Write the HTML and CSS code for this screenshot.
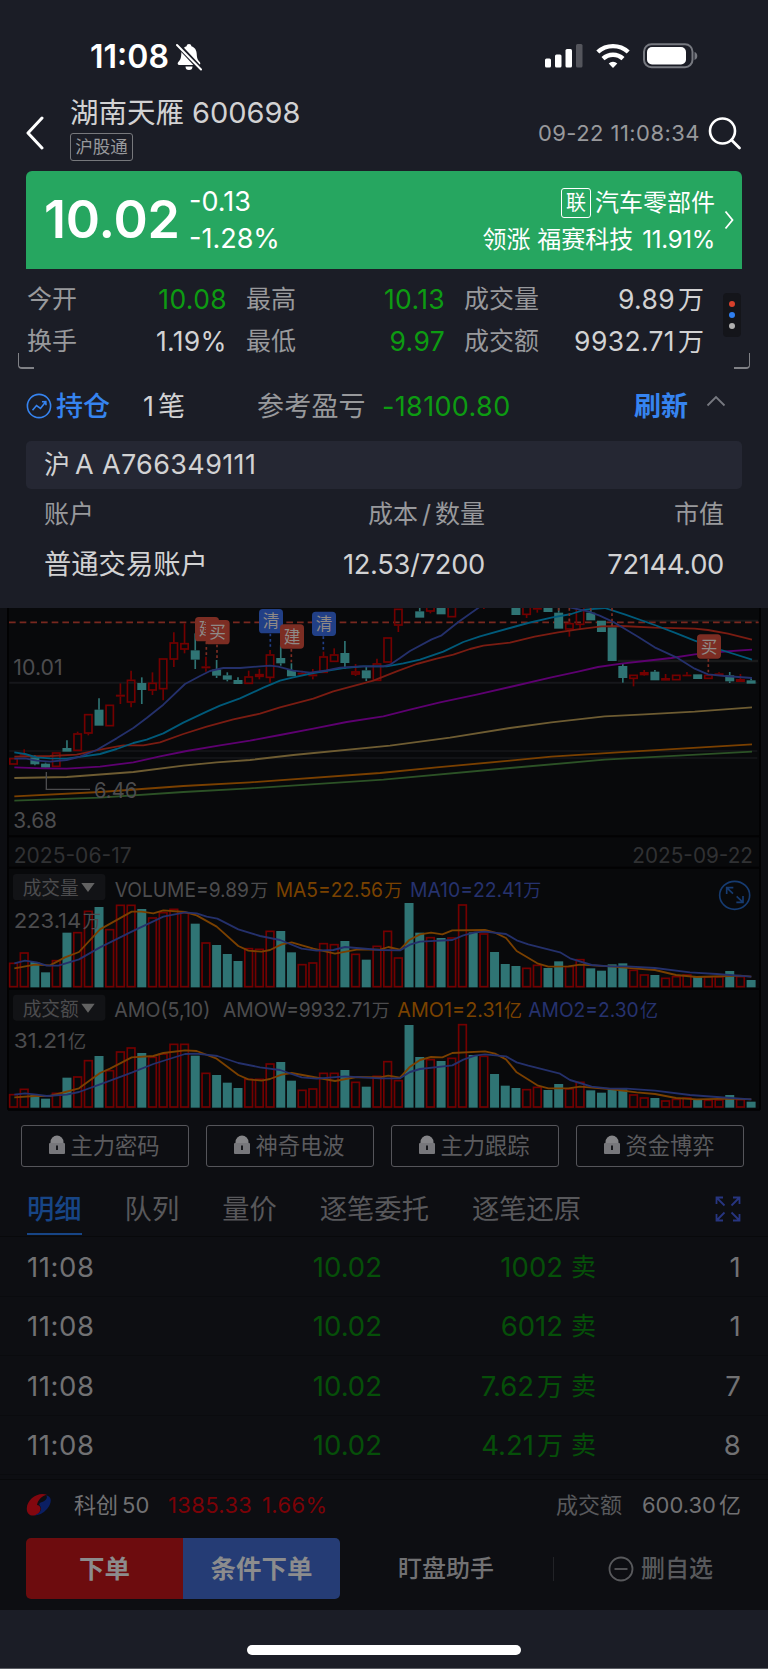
FILE: index.html
```html
<!DOCTYPE html>
<html lang="zh-CN">
<head>
<meta charset="utf-8">
<title>湖南天雁 600698</title>
<link rel="stylesheet" href="styles.css">
</head>
<body>
<div class="screen">
  <header class="status">
    <span class="clock">11:08</span>
    <svg class="bell" width="26" height="28" viewBox="0 0 26 28"><path d="M13 1c1.400 0 2.200.9 2.400 2.200 3.600 1.100 5.100 4 5.300 7.600.3 5 1 6.300 3 8.300 1.200 1.300.6 2.900-1 2.900H3.300c-1.600 0-2.200-1.600-1-2.900 2-2 2.700-3.300 3-8.300.2-3.600 1.700-6.500 5.300-7.600C10.800 1.900 11.600 1 13 1zM9.500 23.500h7a3.500 3.500 0 0 1-7 0z" fill="#fff"/><path d="M1.500 1.500l23.500 25" stroke="#1b1d26" stroke-width="5"/><path d="M1 2l24 24.500" stroke="#fff" stroke-width="2" stroke-linecap="round"/></svg>
    <svg class="signals" width="154" height="27" viewBox="0 0 154 27"><g fill="#fff"><rect x="1" y="15.500" width="6" height="9" rx="1.500"/><rect x="11" y="11.500" width="6.500" height="13" rx="1.500"/><rect x="21.500" y="6" width="6.500" height="18.500" rx="1.500"/><rect x="32" y="1" width="6.500" height="23.500" rx="1.500" opacity=".25"/><path d="M69 25l-4.300-4.400a6.200 6.200 0 0 1 8.600 0z"/></g><g fill="none" stroke="#fff" stroke-width="4.400"><path d="M53.800 9a22.500 22.500 0 0 1 30.400 0"/><path d="M59 15.700a14.600 14.600 0 0 1 20 0"/></g><rect x="100" y="1.200" width="48.500" height="23" rx="7.500" fill="none" stroke="#777980" stroke-width="2"/><rect x="103" y="4" width="39" height="17.500" rx="5" fill="#fff"/><path d="M150.500 9v8c1.800-.6 2.800-2.200 2.800-4s-1-3.400-2.800-4z" fill="#777980"/></svg>
  </header>

  <div class="title-bar">
    <svg class="back" width="20" height="34" viewBox="0 0 20 34"><path d="M17 2L3 17l14 15" fill="none" stroke="#fff" stroke-width="3" stroke-linecap="round" stroke-linejoin="round"/></svg>
    <div class="stock">
      <div class="stock-name">湖南天雁<span>600698</span></div>
      <div class="tag">沪股通</div>
    </div>
    <time class="stamp">09-22 11:08:34</time>
    <svg class="search" width="34" height="34" viewBox="0 0 34 34"><circle cx="14.500" cy="15" r="12.500" fill="none" stroke="#fff" stroke-width="2.600"/><path d="M23.500 24l8 8" stroke="#fff" stroke-width="2.800" stroke-linecap="round"/></svg>
  </div>

  <section class="quote">
    <div class="price">10.02</div>
    <div class="change"><div>-0.13</div><div class="pct">-1.28%</div></div>
    <div class="sector">
      <div><span class="link-tag">联</span>汽车零部件</div>
      <div class="lead">领涨 福赛科技 <span>11.91%</span></div>
    </div>
    <svg class="go" width="12" height="20" viewBox="0 0 12 20"><path d="M2.500 1.500L9.500 10l-7 8.500" fill="none" stroke="#fff" stroke-width="1.800"/></svg>
  </section>

  <section class="stats">
    <div class="stat-grid">
      <span>今开</span><b class="down">10.08</b><span>最高</span><b class="down">10.13</b><span>成交量</span><b>9.89<i>万</i></b>
      <span>换手</span><b>1.19%</b><span>最低</span><b class="down">9.97</b><span>成交额</span><b>9932.71<i>万</i></b>
    </div>
    <div class="more"><i class="dot red"></i><i class="dot blue"></i><i class="dot gray"></i></div>
    <i class="corner left"></i><i class="corner right"></i>
  </section>

  <section class="holding">
    <svg class="trend" width="26" height="26" viewBox="0 0 26 26" fill="none" stroke="#3684f0" stroke-width="1.600"><circle cx="13" cy="13" r="11.600"/><path d="M6.500 17.200l4-4.700 4 3 5-6.500M16 8.700l3.800-.2.200 3.800"/></svg>
    <span class="pos">持仓</span>
    <span class="count">1<i>笔</i></span>
    <span class="pl-label">参考盈亏</span>
    <span class="pl down">-18100.80</span>
    <span class="refresh">刷新</span>
    <svg class="fold" width="20" height="12" viewBox="0 0 20 12"><path d="M1.500 10.500L10 2l8.500 8.500" fill="none" stroke="#777980" stroke-width="1.800"/></svg>
  </section>
  <div class="account">沪<span>A A766349111</span></div>
  <div class="table-row head"><span>账户</span><span>成本<em>/</em>数量</span><span>市值</span></div>
  <div class="table-row"><span>普通交易账户</span><span class="num cost">12.53/7200</span><span class="num">72144.00</span></div>

  <section class="charts">
    <svg id="chart" width="768" height="506" viewBox="0 24 2304 1518"></svg>
  </section>

  <section class="tools">
    <div><svg class="lock" viewBox="0 0 18 20"><path d="M2.500 8.500V7a6.500 6.500 0 0 1 13 0v1.500z" fill="#858588"/><rect x="1" y="8" width="16" height="11" rx="1" fill="#77777b"/><path d="M9 10.500v4.500" stroke="#0d0e12" stroke-width="1.800"/></svg>主力密码</div>
    <div><svg class="lock" viewBox="0 0 18 20"><path d="M2.500 8.500V7a6.500 6.500 0 0 1 13 0v1.500z" fill="#858588"/><rect x="1" y="8" width="16" height="11" rx="1" fill="#77777b"/><path d="M9 10.500v4.500" stroke="#0d0e12" stroke-width="1.800"/></svg>神奇电波</div>
    <div><svg class="lock" viewBox="0 0 18 20"><path d="M2.500 8.500V7a6.500 6.500 0 0 1 13 0v1.500z" fill="#858588"/><rect x="1" y="8" width="16" height="11" rx="1" fill="#77777b"/><path d="M9 10.500v4.500" stroke="#0d0e12" stroke-width="1.800"/></svg>主力跟踪</div>
    <div><svg class="lock" viewBox="0 0 18 20"><path d="M2.500 8.500V7a6.500 6.500 0 0 1 13 0v1.500z" fill="#858588"/><rect x="1" y="8" width="16" height="11" rx="1" fill="#77777b"/><path d="M9 10.500v4.500" stroke="#0d0e12" stroke-width="1.800"/></svg>资金博弈</div>
  </section>

  <nav class="tabs">
    <span class="active">明细</span><span>队列</span><span>量价</span><span>逐笔委托</span><span>逐笔还原</span>
    <svg class="expand" width="26" height="26" viewBox="0 0 26 26" fill="none" stroke="#273580" stroke-width="1.800"><path d="M1.500 8V1.500H8M1.500 1.500l8 8M18 1.500h6.500V8M24.500 1.500l-8 8M1.500 18v6.500H8M1.500 24.500l8-8M18 24.500h6.500V18M24.500 24.500l-8-8"/></svg>
  </nav>

  <div class="ticks">
    <div class="tick"><span>11:08</span><span class="g">10.02</span><span class="g qty">1002</span><span class="g side">卖</span><span class="cnt">1</span></div>
    <div class="tick"><span>11:08</span><span class="g">10.02</span><span class="g qty">6012</span><span class="g side">卖</span><span class="cnt">1</span></div>
    <div class="tick"><span>11:08</span><span class="g">10.02</span><span class="g qty">7.62<i>万</i></span><span class="g side">卖</span><span class="cnt">7</span></div>
    <div class="tick"><span>11:08</span><span class="g">10.02</span><span class="g qty">4.21<i>万</i></span><span class="g side">卖</span><span class="cnt">8</span></div>
  </div>

  <div class="index">
    <svg class="logo" width="26" height="24" viewBox="0 0 26 24"><path d="M21 1.800C12-1.500 1 6 .8 15.500.6 20 3.500 23 8 22.500c4-.5 7-4 6.500-7.500-.4-2.200-2-2.700-3.500-3C12 6.500 16 3 21 1.800z" fill="#82070f"/><path d="M20 2.200c7 1.300 5.500 8.800 1 13.800-4 4.500-8.500 6.500-13 6.500 4.500-1.500 7.500-4.500 7-7.500-.5-2.500-2.500-3-1.500-4.500 1-1.500 4-1.500 6-3.500 1.500-1.500 2-3.500.5-4.800z" fill="#0b1f63"/></svg>
    <span class="idx-name">科创<i>50</i></span><span class="idx-val">1385.33</span><span class="idx-pct">1.66%</span>
    <span class="idx-label">成交额</span><span class="idx-amt">600.30<i>亿</i></span>
  </div>

  <footer class="actions">
    <div class="order">下单</div><div class="cond">条件下单</div>
    <div class="helper">盯盘助手</div><i class="split"></i>
    <svg class="minus" width="26" height="26" viewBox="0 0 26 26" fill="none" stroke="#58595c" stroke-width="1.800"><circle cx="13" cy="13" r="11.500"/><path d="M6.500 13h13"/></svg>
    <div class="remove">删自选</div>
  </footer>
  <div class="home"><i></i></div>
</div>
<script src="chart.js"></script>
</body>
</html>
```
FILE: styles.css
```css
* { box-sizing: border-box; }
body { margin: 0; background: #1b1d26; }
i, em { font-style: normal; }
svg { display: block; flex: none; }
.screen {
  width: 768px; height: 1669px; overflow: hidden;
  display: flex; flex-direction: column;
  background: #1b1d26; color: #d2d2d3;
  font-family: Inter, "Noto Sans CJK SC", sans-serif;
  line-height: 1; white-space: nowrap;
}
.screen > * { flex: none; }
.down { color: #0d9b12; }

.status { height: 113px; padding: 0 70px 0 90px; display: flex; align-items: center; }
.clock { width: 85px; font-size: 32px; font-weight: 600; letter-spacing: 0; color: #fff; }
.bell { margin: 0 0 0 1px; }
.signals { margin-left: auto; }

.title-bar { height: 58px; display: flex; align-items: center; padding: 0 26px 0 25px; margin-top: -9px; }
.stock { margin-left: 25px; height: 58px; display: flex; flex-direction: column; align-items: flex-start; }
.stock-name { font-size: 28.500px; line-height: 30px; margin-top: -6px; }
.stock-name span { margin-left: 8px; font-size: 29px; }
.tag { margin-top: 5px; height: 28px; width: 63px; border: 1px solid #77787c; border-radius: 3px; font-size: 17.500px; line-height: 26px; text-align: center; color: #98999c; }
.stamp { margin-left: auto; font-size: 22px; color: #98999c; letter-spacing: .45px; }
.search { margin-left: 8px; }

.quote { height: 98px; margin: 9px 26px 0; padding: 0 27px 0 18px; border-radius: 6px 6px 0 0; background: #26a660; color: #fff; display: flex; align-items: center; }
.price { width: 145px; font-size: 52px; font-weight: 600; letter-spacing: -.2px; }
.change { font-size: 27px; line-height: 37px; letter-spacing: 0; }
.sector { margin: 2px 0 0 auto; text-align: right; font-size: 24px; line-height: 37px; }
.sector > div { display: flex; justify-content: flex-end; align-items: center; }
.link-tag { width: 30px; height: 30px; margin-right: 4px; border: 1px solid #fff; border-radius: 3px; font-size: 20px; line-height: 28px; text-align: center; }
.lead span { margin-left: 9px; letter-spacing: -.3px; font-size: 24px; }
.go { margin: 0 -20px 0 8px; }

.stats { position: relative; height: 102px; padding: 9px 27px 0 27px; display: flex; justify-content: space-between; }
.stat-grid { width: 678px; display: grid; grid-template-columns: 60px 140px 60px 158px 80px 179px; grid-template-rows: 42px 42px; align-items: center; font-size: 25px; }
.stat-grid span { color: #98999c; }
.stat-grid b { font-weight: 400; text-align: right; font-size: 26.500px; letter-spacing: .35px; }
.stat-grid span:nth-of-type(3n+2) { padding-left: 19px; }
.stat-grid span:nth-of-type(3n) { padding-left: 19px; }
.stat-grid b i { margin-left: 3px; font-size: 26px; letter-spacing: 0; }
.more { width: 18px; height: 44px; margin-top: 15px; border-radius: 4px; background: #14151a; display: flex; flex-direction: column; align-items: center; justify-content: center; gap: 5px; }
.dot { width: 6px; height: 6px; border-radius: 50%; }
.dot.red { background: #d8402c; } .dot.blue { background: #2f7ff0; } .dot.gray { background: #b0b0b0; }
.corner { position: absolute; bottom: 2px; width: 16px; height: 16px; border-bottom: 2px solid #808186; }
.corner.left { left: 18px; border-left: 1.500px solid #808186; border-bottom-left-radius: 4px; }
.corner.right { right: 18px; border-right: 1.500px solid #808186; border-bottom-right-radius: 4px; }

.holding { height: 70px; padding: 0 42px 0 26px; display: flex; align-items: center; font-size: 27px; }
.pos { margin-left: 4px; width: 87px; color: #3684f0; font-weight: 500; }
.count { width: 114px; } .count i { margin-left: 4px; }
.pl-label { width: 125px; color: #98999c; letter-spacing: .2px; }
.pl { letter-spacing: .35px; }
.refresh { margin-left: auto; margin-right: 18px; color: #3684f0; font-weight: 700; }
.fold { margin-top: -10px; }
.account { height: 48px; margin: 0 26px; padding-left: 18px; background: #252733; border-radius: 5px; font-size: 26px; line-height: 47px; }
.account span { margin-left: 5px; letter-spacing: .35px; font-size: 27px; }
.table-row { height: 66px; padding: 0 44px 21px; display: grid; grid-template-columns: 220px 221px 1fr; align-items: center; font-size: 27.300px; }
.table-row.head { height: 53px; padding-bottom: 2px; color: #98999c; font-size: 25px; }
.table-row span + span { text-align: right; }
.table-row em { margin: 0 4px; }
.num { letter-spacing: -.3px; }

.charts { height: 506px; background: #0d0e12; }

.tools { height: 62px; padding: 11px 24px 0 21px; background: #0d0e12; display: grid; grid-template-columns: repeat(4, 168px); justify-content: space-between; color: #5b5b5e; font-size: 22.300px; }
.tools div { height: 42px; padding-right: 2px; border: 1.500px solid #55555a; border-radius: 3px; display: flex; align-items: center; justify-content: center; }
.lock { width: 18px; height: 20px; margin: -3px 4px 0 0; }
.tabs { height: 61px; background: #0d0e12; border-bottom: 1px solid #08090b; padding: 5px 27px 0 27px; display: flex; font-size: 27.300px; color: #58585b; }
.tabs span { height: 54px; line-height: 57px; margin-right: 43px; }
.tabs .active { color: #174586; font-weight: 500; border-bottom: 2.500px solid #174586; }
.expand { margin: 15px 0 0 auto; }
.ticks { background: #0d0e12; height: 243px; border-bottom: 1.500px solid #08090b; }
.tick { height: 59.500px; padding: 2px 27px 0; border-bottom: 1px solid #0a0b0e; display: grid; grid-template-columns: 250px 105px 181px 42px 1fr; align-items: center; font-size: 27.500px; color: #717173; letter-spacing: .3px; }
.tick > span:first-child { letter-spacing: .6px; }
.tick span:not(:first-child) { text-align: right; }
.tick .g { color: #064f09; letter-spacing: 0; } .tick .side { font-size: 25px; padding-right: 9px; }
.tick i { margin-left: 3px; font-size: 26px; }

.index { height: 50px; padding: 0 27px 0 26px; background: #0d0e12; display: flex; align-items: center; color: #717173; font-size: 22px; }
.idx-name { margin-left: 22px; width: 94px; } .idx-name i { margin-left: 4px; }
.idx-val, .idx-pct { color: #7b0207; letter-spacing: .35px; } .idx-val { width: 94px; }
.idx-label { margin-left: auto; margin-right: 20px; color: #58595c; } .idx-amt i { margin-left: 3px; }
.actions { height: 80px; padding: 8px 26px 11px; background: #0d0e12; display: flex; align-items: center; color: #717173; font-size: 24px; }
.order, .cond { width: 157px; height: 61px; line-height: 61px; text-align: center; font-size: 25.500px; font-weight: 700; color: #8c8c8d; }
.order { background: #6d0c0e; border-radius: 5px 0 0 5px; }
.cond { background: #253c75; border-radius: 0 5px 5px 0; }
.helper { margin-left: 58px; font-weight: 500; }
.split { width: 1px; height: 24px; background: #222327; margin: 0 54px 0 59px; }
.remove { margin-left: 7px; color: #58595c; font-weight: 500; }
.home { flex: 1 !important; display: flex; justify-content: center; padding-top: 35px; border-bottom: 1px solid #5a5c62; }
.home i { width: 274px; height: 10px; border-radius: 5px; background: #fff; }
```
FILE: chart.js
```js
// Candles, volume and turnover panels. Units are thirds of a pixel.
const svg = document.getElementById('chart');
const NS = 'http://www.w3.org/2000/svg';
function add(tag, attrs, text) {
  const el = document.createElementNS(NS, tag);
  for (const k in attrs) el.setAttribute(k, attrs[k]);
  if (text) el.textContent = text;
  svg.appendChild(el);
  return el;
}
const rect = (x, y, w, h, fill, more) => add('rect', { x, y, width: w, height: h, fill, ...more });
const line = (x1, y1, x2, y2, stroke, w, dash) =>
  add('line', { x1, y1, x2, y2, stroke, 'stroke-width': w || 4, 'stroke-dasharray': dash || 'none' });
const FONT = 'Inter, "Noto Sans CJK SC", sans-serif';
const label = (s, x, y, w, fill, size) =>
  add('text', { x, y, fill, 'font-size': size || 63, textLength: w, lengthAdjust: 'spacingAndGlyphs', 'font-family': FONT }, s);
const curve = (pts, stroke) =>
  add('path', { d: 'M' + pts.trim().split(/\s+/).join('L'), fill: 'none', stroke, 'stroke-width': 5.5, 'stroke-linejoin': 'round' });
const RED = '#730000', GREEN = '#2f7474', X = i => 40.5 + 32.07 * i;

rect(23, 24, 2257, 1505, '#08090b');
line(24, 24, 24, 1529, '#020203', 6);
line(2280, 24, 2280, 1529, '#020203', 6);
[709, 803, 1167, 1529].forEach(y => line(24, y, 2280, y, '#020203', 6));
line(28, 248, 2272, 248, '#16171b', 6);
line(28, 453, 2272, 453, '#16171b', 5);
line(28, 474, 2272, 474, '#16171b', 5);
line(1854, 183, 2274, 183, '#191a1b', 8);
line(1930, 62, 2274, 62, '#17181a', 6);
line(27, 67, 2276, 67, '#78281f', 5, '20 12');

// [color, top, bottom, high, low]; f = solid rising body
const candles = `r 474 494 474 494|f 462 467 448 470|g 472 493 465 496|g 491 503 488 506|r 457 501 457 501|g 444 455 421 455|r 400 453 395 453|r 342 401 342 406|g 329 377 295 377|r 314 379 314 379|f 284 290 250 312|r 239 308 212 322|g 249 270 232 312|r 248 272 217 285|r 175 268 175 301|r 127 179 97 201|r 129 149 70 160|g 151 179 100 207|f 199 205 170 215|g 209 227 180 234|g 226 239 217 244|g 240 252 232 252|r 229 252 212 252|r 222 231 207 238|r 163 234 150 248|g 174 190 135 197|g 210 229 190 229|f 218 224 212 226|f 223 229 207 238|r 169 219 155 219|r 163 186 145 186|g 159 189 123 207|r 214 224 192 228|g 211 235 200 243|r 190 243 176 243|r 112 188 112 188|r 26 77 26 96||g 34 53 15 53|r 10 35 10 40|g 10 43 10 43|r 10 52 10 52|||f 18 20 18 27|||g 10 45 10 45|r 10 45 10 54|f 15 29 10 38|g 10 36 10 36|g 38 86 24 86|r 69 89 55 110|r 15 75 10 87|g 38 61 24 61|g 62 96 62 96|g 82 183 70 183|g 198 234 190 248|r 224 237 224 259|f 216 226 210 228|g 215 241 210 241|f 234 242 222 242|r 224 241 224 241|f 224 229 216 229|g 223 237 223 237|r 224 237 224 237|f 220 227 217 227|g 226 244 216 249|f 237 246 222 246|g 241 251 235 251`.split('|');
candles.forEach((c, i) => {
  if (!c) return;
  const [k, t, b, h, l] = c.split(' ').map((v, n) => n ? +v : v), x = X(i), col = k === 'g' ? GREEN : RED;
  if (h < t) line(x, h, x, t, col, 5);
  if (l > b) line(x, b, x, l, col, 5);
  if (k === 'r') rect(x - 11, t + 2, 22, b - t - 4, 'none', { stroke: col, 'stroke-width': 5 });
  else rect(x - 13.5, t, 27, b - t, col);
});

curve('43,602 300,593 550,576 750,565 1150,539 1530,504 1814,479 2256,455', '#2c5226');
curve('43,589 300,576 550,558 750,547 1140,519 1310,502 1530,482 1654,470 1854,457 2256,433', '#7a4000');
curve('43,534 200,531 400,516 550,497 650,487 750,480 880,465 1170,437 1350,413 1530,384 1654,367 1814,349 1934,343 2084,335 2256,322', '#6e5c32');
curve('43,502 130,505 200,506 300,500 400,487 480,469 560,453 660,436 750,422 840,405 940,386 1040,366 1150,349 1230,329 1320,307 1430,284 1530,261 1654,232 1734,215 1794,201 1864,191 1934,183 2014,174 2084,163 2154,156 2256,149', '#5d0070');
curve('43,470 150,468 230,464 300,449 370,436 430,436 480,427 550,402 620,380 700,358 780,341 840,322 940,296 1000,274 1120,242 1190,214 1250,192 1310,176 1360,164 1410,147 1450,137 1530,128 1604,110 1674,97 1734,88 1804,79 1864,78 1964,83 2084,86 2124,90 2184,101 2256,119', '#7a1c12');
curve('43,457 75,462 110,472 150,475 200,476 250,469 300,462 350,447 400,429 440,419 490,400 550,368 620,335 660,317 720,295 790,263 840,242 880,232 940,219 1030,204 1090,199 1160,199 1210,190 1260,179 1330,155 1390,126 1440,109 1530,84 1584,69 1654,53 1714,42 1754,29 1814,24 1874,43 1964,75 2024,98 2084,122 2164,150 2256,179', '#005a7a');
curve('43,476 75,475 110,482 150,485 200,480 240,470 290,450 350,415 400,384 440,354 490,314 555,252 600,228 630,213 670,204 720,204 780,199 810,197 835,200 880,212 930,218 980,211 1020,203 1080,199 1150,199 1170,194 1200,174 1230,153 1295,118 1325,106 1375,66 1440,20', '#24306b');
curve('1699,20 1764,34 1799,47 1844,68 1914,110 1964,142 2029,172 2084,206 2124,223 2174,228 2256,234', '#24306b');

line(139, 516, 139, 568, '#4c4c4e', 4);
line(137, 568, 270, 568, '#4c4c4e', 4);
label('10.01', 40, 226, 148, '#4c4c4e');
label('6.46', 282, 594, 130, '#4c4c4e');
label('3.68', 40, 684, 131, '#4c4c4e');
label('2025-06-17', 41, 790, 354, '#303133');
label('2025-09-22', 1897, 790, 362, '#303133');

// trade markers
const badge = (s, x, y, fill, drop) => {
  line(x + 34, y + 74, x + 34, drop, fill, 5, '8 8');
  rect(x, y, 72, 73, fill, { rx: 11 });
  add('text', { x: x + 36, y: y + 55, fill: '#8f8986', 'font-size': 50, 'text-anchor': 'middle', 'font-family': '"Noto Sans CJK SC", sans-serif' }, s);
};
const BR = '#7c2d23', BB = '#213f86';
badge('建', 585, 51, BR, 172);
badge('买', 617, 60, BR, 182);
badge('清', 777, 27, BB, 140);
badge('建', 840, 73, BR, 190);
badge('清', 936, 35, BB, 150);
badge('买', 2091, 103, BR, 218);
[1676, 1708, 1772, 1836].forEach((x, i) => line(x, 24, x, [34, 66, 34, 78][i], BR, 5, '8 8'));

// volume and turnover
const vol = [278,247,276,307,270,188,186,122,111,177,104,104,117,142,126,116,127,161,217,225,252,273,234,236,182,183,247,282,277,219,222,213,251,269,227,182,262,99,188,201,204,202,103,187,190,246,282,288,293,284,294,274,288,267,295,302,283,280,299,313,315,323,318,313,319,319,319,303,318,330];
const amo = [672,656,675,686,668,623,619,570,558,600,544,532,549,560,550,521,521,557,608,615,638,654,626,626,580,576,632,659,655,608,608,600,635,650,617,573,630,465,561,567,573,563,462,555,557,612,647,654,657,650,660,642,655,635,661,668,658,658,673,682,684,691,686,682,689,689,688,675,687,695];
const falling = new Set([2,3,5,8,12,17,19,20,21,25,26,31,33,37,38,40,43,45,46,47,50,51,54,55,56,57,60,64,67,69]);
[[vol, 352], [amo, 713]].forEach(([d, base]) => d.forEach((t, i) => {
  const x = X(i), y = t + 810;
  if (falling.has(i)) rect(x - 13.5, y, 27, base - t, GREEN);
  else rect(x - 11.5, y + 2, 23, base - t - 4, 'none', { stroke: RED, 'stroke-width': 5 });
}));
const low = (pts, stroke) => curve(pts.trim().split(/\s+/).map(p => { const [x, y] = p.split(','); return x + ',' + (+y + 810); }).join(' '), stroke);
low('43,295 105,284 150,286 195,262 237,246 300,178 395,125 425,125 460,130 490,121 555,126 590,136 650,170 715,228 745,242 785,245 810,240 845,223 875,217 940,236 1005,251 1070,239 1140,239 1165,231 1200,239 1228,210 1260,193 1293,188 1327,193 1357,181 1455,180 1485,188 1518,204 1550,243 1612,280 1645,290 1705,289 1740,284 1830,289 1910,296 1965,300 2028,315 2090,321 2189,318 2221,317 2254,320', '#7a4000');
low('43,280 75,272 110,277 140,287 175,287 237,268 300,232 395,185 490,140 555,127 590,130 620,140 652,146 715,178 780,198 840,210 905,236 950,242 1000,240 1035,231 1140,240 1200,241 1230,224 1260,215 1357,210 1390,196 1425,187 1455,185 1518,192 1550,211 1585,223 1680,247 1710,265 1775,285 1830,289 1880,289 1965,294 2070,307 2150,312 2254,320', '#24306b');
low('43,682 105,678 150,678 237,655 300,609 330,596 395,562 460,558 490,549 555,541 590,543 650,566 715,615 745,628 785,632 810,627 845,614 875,609 1005,633 1070,621 1140,622 1165,617 1200,623 1228,592 1260,570 1293,561 1327,562 1357,549 1455,544 1485,551 1518,568 1550,607 1612,646 1645,655 1705,655 1740,650 1830,657 1910,667 1965,672 2028,684 2090,688 2189,686 2254,688', '#7a4000');
low('43,674 75,670 110,674 140,678 200,674 237,666 300,643 395,608 460,582 555,552 590,551 652,558 715,579 780,592 840,600 905,622 950,626 1035,619 1140,625 1200,625 1230,606 1260,597 1357,586 1390,569 1425,557 1455,553 1518,559 1550,577 1585,587 1680,611 1710,630 1775,650 1830,656 1880,656 1965,662 2070,675 2150,681 2254,688', '#24306b');

const GR = '#4c4c4e', OR = '#7a4200', BL = '#26326e';
[['成交量', 822], ['成交额', 1184]].forEach(([s, y]) => {
  rect(39, y, 277, 78, '#121316', { rx: 10 });
  label(s, 68, y + 63, 168, GR, 57);
  add('path', { d: `M244 ${y + 27}h40l-20 27z`, fill: '#626262' });
});
// the unit sits closer to the figure than a full space
const amount = (s, unit, x, y, w, fill, size = 60) => {
  label(s, x, y, w - size + 2, fill, size);
  add('text', { x: x + w - size + 6, y, fill, 'font-size': size - 6, 'font-family': FONT }, unit);
};
amount('VOLUME=9.89', '万', 344, 891, 461, GR);
amount('MA5=22.56', '万', 827, 891, 380, OR);
amount('MA10=22.41', '万', 1230, 891, 394, BL);
amount('223.14', '万', 41, 984, 262, GR, 61);
label('AMO(5,10)', 343, 1252, 288, GR, 60);
amount('AMOW=9932.71', '万', 669, 1252, 500, GR);
amount('AMO1=2.31', '亿', 1192, 1252, 374, OR);
amount('AMO2=2.30', '亿', 1585, 1252, 389, BL);
amount('31.21', '亿', 41, 1345, 217, GR, 61);
add('ellipse', { cx: 2204, cy: 886, rx: 45, ry: 42, fill: 'none', stroke: '#163b70', 'stroke-width': 5 });
add('path', { d: 'M2180 882v-19h20M2180 863l19 18M2229 888v19h-20M2229 907l-19-18', fill: 'none', stroke: '#163b70', 'stroke-width': 5 });
```
